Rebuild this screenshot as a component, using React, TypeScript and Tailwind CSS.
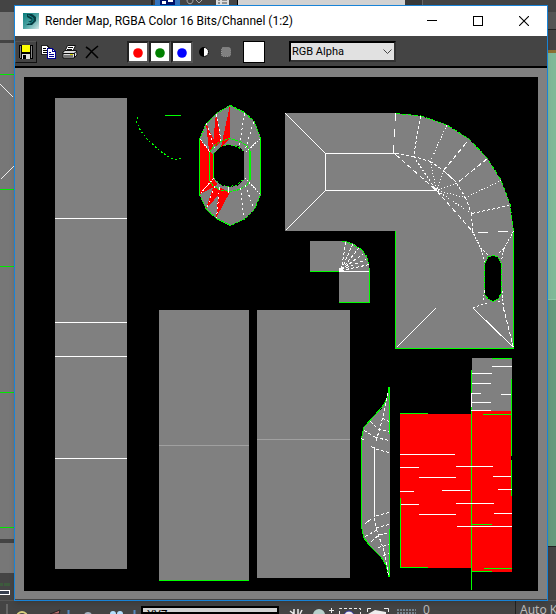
import React from "react";

type Seg = [number, number, number, number];

const G = "#00ff00";
const W = "#ffffff";

function Lines({ items, color, dash }: { items: Seg[]; color: string; dash?: string }) {
  return (
    <g stroke={color} strokeWidth="1" strokeDasharray={dash} fill="none">
      {items.map(([a, b, c, d], i) => (
        <line key={i} x1={a + 0.5} y1={b + 0.5} x2={c + 0.5} y2={d + 0.5} />
      ))}
    </g>
  );
}

/* Horizontal and vertical edges drawn as whole pixels: x, y, width, height */
function Bars({ items, color }: { items: Seg[]; color: string }) {
  return (
    <g fill={color}>
      {items.map(([x, y, w, h], i) => (
        <rect key={i} x={x} y={y} width={w} height={h} />
      ))}
    </g>
  );
}

function RenderMap() {
  return (
    <svg
      viewBox="24 77 514 514"
      className="block h-full w-full bg-black"
      shapeRendering="crispEdges"
      role="img"
      aria-label="Rendered UV template"
    >
      <g fill="#808080">
        <rect x="55" y="98" width="72" height="471" />
        <rect x="159" y="310" width="90" height="270" />
        <rect x="257" y="310" width="93" height="268" />
        <rect x="310" y="241" width="36" height="31" />
        <path d="M339 241H345L354 244L362 250L367 257L369 265V271H339Z" />
        <rect x="339" y="271" width="31" height="31" />
        <path d="M285 113H396L421 116L447 125L469 139L487 158L501 180L510 204L514 232V349H395V231H285Z" />
        <path d="M390 387L387 399L382 408L375 415L364 427L361 438V527L364 538L370 547L381 557L386 565L390 577Z" />
      </g>
      <Bars color={W} items={[[55, 218, 72, 1], [55, 322, 72, 1], [55, 356, 72, 1], [55, 458, 72, 1]]} />
      <Bars color="#a0a0a0" items={[[159, 445, 90, 1], [257, 439, 93, 1]]} />
      <Bars color={G} items={[[159, 580, 90, 1], [165, 115, 16, 1]]} />
      <path d="M137.500 117L136.500 122L140.500 130.500L147.500 139.500L159.500 150.500L169.500 157.500L175.500 159.500L181.500 158.500" fill="none" stroke={G} strokeDasharray="2 2" />

      {/* octagonal ring */}
      <path
        fill="#808080"
        fillRule="evenodd"
        d="M230 105L244 112L254 121L261 138V194L254 209L245 219L230 226L216 218L206 209L199 194V139L206 123L216 113ZM228 145L238 146L244 152V179L237 186L229 187L220 185L214 178V153L220 147Z"
      />
      <g fill="#ff0000">
        <path d="M230 105V139L221 147Z" />
        <path d="M216 113L221 141L216 147L213 144Z" />
        <path d="M206 123L213 138L213 148L209 151Z" />
        <path d="M200 139L209 151L214 155V179L217 184L214 187L200 194Z" />
        <path d="M206 209L213 187L223 190Z" />
        <path d="M216 218L219 187L230 192Z" />
      </g>
      <path
        d="M230.500 105.500L244.500 112.500L254.500 121.500L260.500 138.500V194.500L254.500 209.500L245.500 218.500L230.500 225.500L216.500 218.500L206.500 209.500L199.500 194.500V139.500L206.500 123.500L216.500 113.500Z"
        fill="none" stroke={G} strokeDasharray="3 1"
      />
      <Bars color={G} items={[[199, 139, 1, 55], [260, 138, 1, 56], [209, 153, 1, 27], [213, 153, 1, 25], [249, 151, 2, 29]]} />
      <path d="M209.500 153L214 146L220 141.500L230 138.500L240 141.500L247 146L250 151M209.500 180L213 186L220 190L230 191.500L240 189.500L247 185L250 180" fill="none" stroke={G} strokeDasharray="3 1" />
      <path d="M214 153L220 147L228 144.500L238 146.500L244 152M214 178L220 184L229 186.500L237 185L244 179" fill="none" stroke={G} strokeDasharray="2 2" />
      <Lines color={W} dash="2 3" items={[[244, 113, 239, 145], [253, 122, 245, 148], [240, 188, 243, 216], [245, 185, 253, 208], [216, 114, 221, 143], [206, 123, 214, 148], [219, 187, 216, 218], [214, 186, 206, 208]]} />
      <Lines color={W} dash="2 1" items={[[200, 139, 210, 152], [260, 138, 245, 152], [200, 193, 213, 178], [260, 194, 245, 178]]} />
      <Bars color={W} items={[[228, 187, 1, 6]]} />

      {/* bent duct */}
      <Bars color={G} items={[[395, 231, 1, 118], [395, 348, 119, 1], [513, 229, 1, 120]]} />
      <path d="M396 113.500L421 116L447 125L469 139L487 158L501 180L510 204L513.500 232" fill="none" stroke={G} strokeDasharray="4 2" />
      <Bars color={W} items={[[325, 153, 71, 1], [325, 190, 111, 1], [325, 153, 1, 38]]} />
      <Lines color={W} items={[[285, 113, 325, 153], [285, 230, 325, 190], [396, 347, 435, 308], [473, 308, 513, 347]]} />
      <Lines color={W} dash="8 8" items={[[395, 113, 393, 153]]} />
      <Lines color={W} dash="10 10" items={[[478, 232, 512, 231]]} />
      <Lines color={W} dash="3 2" items={[[420, 116, 413, 156], [396, 153, 413, 156], [413, 156, 430, 161], [430, 161, 443, 170], [456, 183, 465, 197], [465, 197, 471, 213], [471, 213, 472, 232], [509, 205, 471, 213]]} />
      <Lines color={W} items={[[443, 170, 456, 182]]} />
      <Lines color={W} dash="1 2" items={[[446, 125, 430, 161], [501, 180, 465, 197], [430, 161, 436, 190], [443, 170, 436, 190], [456, 183, 436, 190], [465, 197, 436, 190], [471, 213, 436, 190]]} />
      <Lines color={W} dash="5 3" items={[[466, 142, 443, 170], [487, 158, 456, 183], [395, 154, 436, 190], [436, 190, 472, 231]]} />
      <Lines color={W} dash="2 2" items={[[413, 156, 436, 190]]} />
      <Bars color={W} items={[[434, 188, 3, 3]]} />
      <path d="M493 255L498 257L501 264V293L498 299L493 302L488 299L485 294V264L488 257Z" fill="#000" />
      <path d="M493 255.500L498 257L501.500 264V293L498 299L493 301.500L488 299L484.500 294V264L488 257Z" fill="none" stroke={G} strokeDasharray="5 1" />
      <Lines color={W} dash="2 1" items={[[472, 231, 481, 249], [513, 231, 503, 249]]} />
      <Lines color={W} dash="2 2" items={[[481, 249, 484, 262], [503, 249, 501, 261], [483, 250, 488, 255], [503, 248, 497, 254], [484, 290, 483, 300], [502, 291, 503, 309], [473, 307, 488, 302], [498, 301, 503, 303]]} />
      <Lines color={W} dash="4 2" items={[[503, 308, 513, 347]]} />

      {/* small elbow */}
      <Bars color={G} items={[[310, 271, 30, 1], [369, 268, 1, 34], [339, 302, 31, 1]]} />
      <path d="M342 241.500H346L354 245L362 250L367 257L369 265" fill="none" stroke={G} strokeDasharray="3 1" />
      <Bars color={W} items={[[339, 271, 30, 1], [339, 268, 4, 3]]} />
      <Lines color={W} dash="3 2" items={[[341, 269, 345, 242], [341, 269, 352, 244], [341, 269, 358, 248], [341, 269, 363, 253], [341, 269, 366, 259], [341, 270, 369, 264]]} />

      {/* narrow flange */}
      <path d="M389.500 387V434M389.500 529V577" fill="none" stroke={G} />
      <path d="M389 387L387 399L382 407L375 415L364 427L361.500 438V527L364 538L370 546L381 557L386 565L389 577" fill="none" stroke={G} />
      <Bars color={W} items={[[374, 447, 1, 70]]} />
      <Lines color={W} dash="3 2" items={[[387, 393, 382, 418], [382, 418, 375, 443], [370, 421, 378, 429], [378, 429, 389, 431], [382, 418, 389, 421], [364, 430, 375, 437], [375, 437, 389, 440], [371, 446, 376, 449], [376, 449, 389, 452], [376, 515, 389, 512], [374, 518, 376, 529], [376, 527, 389, 524], [365, 536, 377, 529], [379, 534, 389, 533], [371, 541, 379, 534], [376, 529, 384, 552], [378, 547, 389, 544], [383, 555, 389, 553], [384, 552, 388, 575]]} />
      <Lines color={W} items={[[361, 438, 364, 440], [365, 523, 371, 518]]} />

      {/* flagged strips */}
      <rect x="400" y="414" width="72" height="154" fill="#ff0000" />
      <rect x="472" y="358" width="40" height="53" fill="#808080" />
      <rect x="472" y="411" width="40" height="161" fill="#ff0000" />
      <rect x="511" y="456" width="1" height="4" fill="#000" />
      <Bars color={G} items={[[400, 413, 28, 1], [400, 498, 1, 70], [400, 567, 28, 1], [471, 370, 1, 220], [492, 358, 20, 1], [511, 379, 1, 77], [511, 460, 1, 36], [483, 414, 29, 1], [472, 524, 20, 1], [484, 568, 28, 1], [472, 571, 20, 1]]} />
      <Bars color={W} items={[
        [492, 366, 20, 1], [472, 373, 20, 1], [472, 383, 19, 1], [471, 393, 10, 1], [501, 394, 10, 1], [471, 393, 1, 14], [472, 402, 19, 1], [471, 410, 20, 1],
        [400, 454, 55, 1], [400, 467, 19, 1], [456, 466, 37, 1], [419, 477, 37, 1], [493, 476, 18, 1], [400, 491, 14, 1], [442, 490, 28, 1], [498, 489, 14, 1],
        [401, 504, 18, 1], [456, 503, 38, 1], [419, 514, 37, 1], [494, 513, 18, 1], [457, 526, 55, 1],
      ]} />
    </svg>
  );
}

function Tool({ label, children, className = "" }: { label: string; children: React.ReactNode; className?: string }) {
  return (
    <button type="button" aria-label={label} className={`flex h-[22px] w-[22px] shrink-0 items-center justify-center ${className}`}>
      {children}
    </button>
  );
}

function Channel({ label, color }: { label: string; color: string }) {
  return (
    <button type="button" aria-label={label} aria-pressed="true" className="flex h-[22px] w-[22px] shrink-0 items-center justify-center border-2 border-t-[#222] border-r-[#555] border-b-[#555] border-l-[#222] bg-white">
      <svg width="10" height="12" viewBox="0 -2 10 12">
        <circle cx="5" cy="5" r="4.800" fill={color} />
      </svg>
    </button>
  );
}

function Toolbar() {
  return (
    <div role="toolbar" aria-label="Render map tools" className="flex h-8 shrink-0 items-center border-b-2 border-black bg-[#444] pt-px">
      <Tool label="Save image" className="border border-t-[#555] border-r-[#111] border-b-[#111] border-l-[#555]">
        <svg width="14" height="14" viewBox="0 0 14 14" shapeRendering="crispEdges">
          <path d="M0 0H14V14H1L0 13Z" fill="#000" />
          <path d="M1 1H2V13H1ZM12 1H13V13H12Z" fill="#888" />
          <path d="M3 0H11V7H3Z" fill="#ff0" />
          <path d="M3 9H11V14H3Z" fill="#ddd" />
          <path d="M4 10H7V14H4Z" fill="#000" />
        </svg>
      </Tool>
      <Tool label="Copy image">
        <svg width="15" height="14" viewBox="0 0 15 14" shapeRendering="crispEdges">
          <path d="M.5.500H6L8.500 3V9.500H.500Z" fill="#fff" stroke="#222" />
          <path d="M2 3.500H5M2 5.500H6M2 7.500H6" stroke="#000" />
          <path d="M6.500 3.500H11.500L14.500 6.500V13.500H6.500Z" fill="#fff" stroke="#000090" />
          <path d="M11.500 4V6.500H14M8 7.500H10M8 9.500H13M8 11.500H13" stroke="#000090" fill="none" />
        </svg>
      </Tool>
      <Tool label="Print image">
        <svg width="16" height="14" viewBox="0 0 16 14">
          <path d="M5.500.500H13.500L11 6H3Z" fill="#fff" stroke="#111" />
          <path d="M6 2.500H11M5 4.500H10" stroke="#111" />
          <path d="M1 7L3 5.500H14.500L15 10L12 13H1Z" fill="#ddd" stroke="#111" />
          <path d="M1 8.500H12L15 6M2 11H11M12.500 8V12" stroke="#111" fill="none" />
          <path d="M8 9.500H11" stroke="#dd0" />
        </svg>
      </Tool>
      <Tool label="Clear">
        <svg width="14" height="14" viewBox="0 0 14 14" fill="none" stroke="#000" strokeWidth="1.600">
          <path d="M1 2L4 4L13 13M13 1L7 6L1 13" />
        </svg>
      </Tool>
      <div className="w-6 shrink-0" />
      <Channel label="Enable red channel" color="#ff0000" />
      <Channel label="Enable green channel" color="#008000" />
      <Channel label="Enable blue channel" color="#0000ff" />
      <Tool label="Display alpha channel">
        <svg width="10" height="10" viewBox="0 0 10 10">
          <path d="M5 0A5 5 0 0 0 5 10Z" fill="#000" />
          <path d="M5 1A4 4 0 0 1 5 9Z" fill="#fff" />
          <path d="M5 .500A4.500 4.500 0 0 1 5 9.500" fill="none" stroke="#000" strokeDasharray="1 1" />
        </svg>
      </Tool>
      <Tool label="Monochrome">
        <svg width="10" height="10" viewBox="0 0 10 10">
          <rect x="0.500" y="0.500" width="9" height="9" rx="2" fill="#808080" stroke="#999" strokeDasharray="1 1" />
        </svg>
      </Tool>
      <button type="button" aria-label="Color swatch" className="ml-1.5 h-[22px] w-[22px] shrink-0 border border-black bg-white" />
      <div className="relative ml-6 h-[21px] w-[107px]">
        <select aria-label="Channel display list" className="block h-full w-full appearance-none border-2 border-t-black border-r-[#333] border-b-[#333] border-l-black bg-[#e1e1e1] pl-px font-[Roboto,sans-serif] text-[11px] leading-4 text-black">
          <option>RGB Alpha</option>
        </select>
        <svg className="pointer-events-none absolute top-2 right-1" width="9" height="6" viewBox="0 0 9 6" fill="none" stroke="#444">
          <path d="M.5.500L4.500 4.500L8.500.500" />
        </svg>
      </div>
    </div>
  );
}

function TitleBar() {
  return (
    <header className="flex h-[30px] shrink-0 items-center bg-white pl-2">
      <svg width="16" height="16" viewBox="0 0 16 16" className="shrink-0">
        <defs>
          <linearGradient id="logo" x1="0" y1="0" x2="1" y2="1">
            <stop offset="0" stopColor="#087c7c" />
            <stop offset="0.500" stopColor="#4aa3a2" />
            <stop offset="1" stopColor="#d5e9e8" />
          </linearGradient>
        </defs>
        <rect width="16" height="16" fill="url(#logo)" />
        <path d="M4 1H9L13 4V8L9 12H3L8 9H5L9 7L4 4Z" fill="#073d42" />
        <path d="M5 2L10 5V8L6 11" fill="none" stroke="#168f8e" />
      </svg>
      <h1 className="ml-1.5 truncate font-[Roboto,sans-serif] text-[12px] leading-4 text-black">Render Map, RGBA Color 16 Bits/Channel (1:2)</h1>
      <div className="ml-auto flex h-full shrink-0">
        <button type="button" aria-label="Minimize" className="flex w-[46px] items-center justify-center">
          <svg width="10" height="10" viewBox="0 0 10 10"><path d="M0 4.500H10" stroke="#000" /></svg>
        </button>
        <button type="button" aria-label="Maximize" className="flex w-[46px] items-center justify-center">
          <svg width="10" height="10" viewBox="0 0 10 10"><rect x=".5" y=".5" width="9" height="9" fill="none" stroke="#000" /></svg>
        </button>
        <button type="button" aria-label="Close" className="flex w-[46px] items-center justify-center">
          <svg width="10" height="10" viewBox="0 0 10 10"><path d="M0 0L10 10M10 0L0 10" stroke="#000" strokeWidth="1.100" /></svg>
        </button>
      </div>
    </header>
  );
}

function Workspace() {
  return (
    <div className="flex h-full flex-col bg-[#444]">
      <div className="flex h-3 shrink-0 overflow-hidden">
        <div className="w-[153px] shrink-0 border-r-2 border-[#222]" />
        <svg width="84" height="12" viewBox="153 0 84 12" className="shrink-0">
          <rect x="155" y="0" width="25" height="12" fill="#3473bd" />
          <path d="M160 0H175V6H160Z" fill="#00106a" />
          <path d="M162 1H166V4H162ZM168 0H173V2H168Z" fill="#fff" />
          <path d="M187 0C187 5 193 5 193 0M196 0L199 3L202 0" fill="none" stroke="#aaa" />
          <rect x="216" y="-3" width="13" height="8" fill="#ddd" />
          <path d="M218 0H220M222 0H227M218 3H220M222 3H227" stroke="#444" />
        </svg>
        <div className="w-[168px] shrink-0 border-l border-black bg-[#d2d2d2]" />
        <div className="w-[18px] shrink-0 border-r border-[#666] bg-[#383838]" />
      </div>
      <div className="flex min-h-0 flex-1 justify-between">
        <div className="flex w-3.5 flex-col">
          <div className="h-7 shrink-0 bg-[#777]" />
          <div className="h-[3px] shrink-0 bg-[#444]" />
          <svg viewBox="0 43 14 496" className="min-h-0 w-full flex-1 bg-[#777]" preserveAspectRatio="none" shapeRendering="crispEdges">
            <Bars color="#00e800" items={[[0, 74, 14, 1], [0, 189, 14, 1], [0, 266, 14, 1], [0, 392, 14, 1], [0, 527, 14, 1]]} />
            <Lines color="#eee" items={[[0, 84, 13, 97], [13, 166, 0, 179]]} />
          </svg>
          <div className="h-1 shrink-0 bg-[#444]" />
          <div className="h-[30px] shrink-0 bg-[#777]" />
          <svg viewBox="0 573 14 27" className="h-[27px] w-full shrink-0 bg-[#444]" shapeRendering="crispEdges">
            <path d="M0 583H3V586H0ZM4 583H10V586H4Z" fill="#3d5a3d" />
            <path d="M0 590.500H9.500V594.500H0" fill="#374050" stroke="#fff" />
          </svg>
        </div>
        <div className="flex w-2 flex-col">
          <div className="h-[18px] shrink-0 border-b border-[#222] bg-[#555]" />
          <div className="h-5 shrink-0 bg-[#444]" />
          <div className="h-[3px] shrink-0 bg-[#8b6f32]" />
          <div className="min-h-0 flex-1 border-b border-[#8fc7a6] bg-[#80b998]" />
          <div className="min-h-0 flex-1 bg-[#669a7d]" />
          <div className="h-[54px] shrink-0 border-t border-[#222] bg-[#444]" />
        </div>
      </div>
      <footer className="flex h-3.5 shrink-0 overflow-hidden border-t border-[#555] text-[12px] leading-[17px] text-[#bbb]">
        <svg width="141" height="13" viewBox="0 601 141 13" className="shrink-0">
          <rect x="6" y="604" width="2" height="10" fill="#666" />
          <circle cx="22" cy="617" r="5" fill="none" stroke="#d8cf80" strokeWidth="2" />
          <path d="M50 614L60 610L59 614Z" fill="#b76b6b" stroke="#222" />
          <path d="M68.500 610V614M134.500 610V614" stroke="#5688bf" strokeWidth="2" />
          <circle cx="88" cy="616" r="4" fill="#a8b6c4" />
          <circle cx="113" cy="614" r="3" fill="#b4e0ff" /><circle cx="120" cy="614" r="3" fill="#b4e0ff" />
        </svg>
        <div className="mt-[5px] w-[138px] shrink-0 border-2 border-black bg-[#d2d2d2] pl-1 leading-[14px] text-black">XYZ</div>
        <svg width="144" height="13" viewBox="279 601 144 13" className="shrink-0">
          <path d="M290 611L294 614M294 609V614M298 609V614M302 610L300 614" stroke="#eee" strokeWidth="1.500" />
          <circle cx="319" cy="615" r="6" fill="#b8d0cc" />
          <path d="M329 610.500H334M331.500 608V613" stroke="#eee" />
          <path d="M339.500 614V608.500H360.500V614" fill="none" stroke="#eee" strokeDasharray="3 2" />
          <circle cx="349" cy="616" r="5" fill="#eee" stroke="#3232a0" />
          <path d="M367.500 612V608.500H371M384 608.500H388.500V612" fill="none" stroke="#eee" />
          <path d="M368 614L375 610L386 612V614Z" fill="#eee" />
          <path d="M397 610H416M397 613H416" stroke="#74828c" strokeWidth="2" strokeDasharray="2 1" />
        </svg>
        <span className="w-[93px] shrink-0 border-r border-[#222]">0</span>
        <span className="shrink-0 pl-1">Auto Key</span>
      </footer>
    </div>
  );
}

export default function App() {
  return (
    <main className="relative h-screen overflow-hidden font-['Noto_Sans',sans-serif]">
      <Workspace />
      <section aria-label="Render Map" className="absolute top-[5px] right-2 bottom-[13px] left-3.5 flex flex-col border border-[#1883d7] bg-[#808080] shadow-md">
        <TitleBar />
        <Toolbar />
        <div className="min-h-0 flex-1 border-b border-[#444] px-[9px] pt-[9px] pb-2">
          <RenderMap />
        </div>
      </section>
    </main>
  );
}
